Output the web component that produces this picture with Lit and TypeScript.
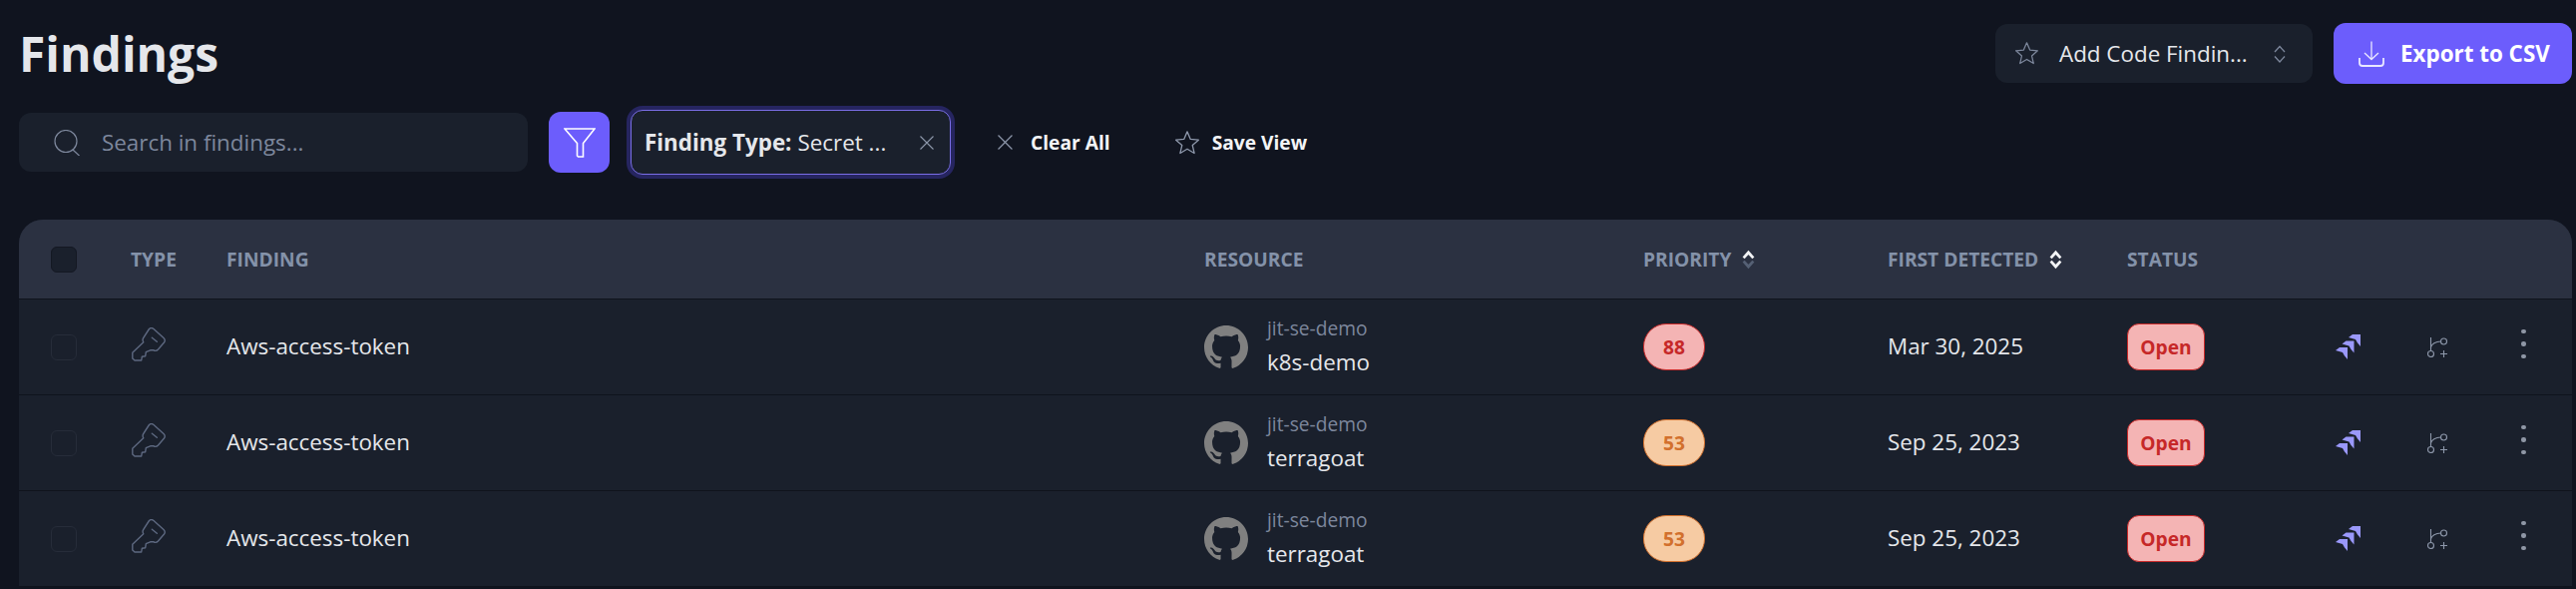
import { LitElement, html, css, svg } from "lit";
import { customElement } from "lit/decorators.js";

type Finding = { name: string; repo: string; score: number; level: "high" | "medium"; date: string };

const FINDINGS: Finding[] = [
  { name: "Aws-access-token", repo: "k8s-demo", score: 88, level: "high", date: "Mar 30, 2025" },
  { name: "Aws-access-token", repo: "terragoat", score: 53, level: "medium", date: "Sep 25, 2023" },
  { name: "Aws-access-token", repo: "terragoat", score: 53, level: "medium", date: "Sep 25, 2023" },
];

const starIcon = html`<svg class="star" viewBox="1 1 22 22" fill="none" stroke="currentColor" stroke-width="1.2" stroke-linejoin="round">
  <path d="M12 1.8l3 6.9 7.4.7-5.6 4.9 1.7 7.3-6.5-3.9-6.5 3.9 1.7-7.3-5.6-4.9 7.4-.7z" />
</svg>`;

const closeIcon = html`<svg class="close" viewBox="1 1 14 14" fill="none" stroke="currentColor" stroke-width="1.1">
  <path d="M1.5 1.5l13 13M14.500 1.500l-13 13" />
</svg>`;

const keyIcon = html`<svg class="key" viewBox="0 0 34 34" fill="none" stroke="currentColor" stroke-width="1.4" stroke-linejoin="round" stroke-linecap="round">
  <path d="M17.500 1.500Q19.700-.5 22 1.500L32 10.500Q34.200 12.700 32.500 15L26.500 22Q24.300 24.400 21.700 22.600L18.700 22.800 14.300 24.700 13.700 28.700 10.300 29.300 9.700 33H3L.8 31V25.300L11.800 14.800Q10.200 12.500 12 10z" />
  <path d="M20.300 10.300l5 4" />
</svg>`;

const githubIcon = html`<svg class="gh" viewBox="0 0 16 16" fill="#808080">
  <path d="M8 0C3.58 0 0 3.58 0 8c0 3.54 2.29 6.53 5.47 7.59.4.07.55-.17.55-.38 0-.19-.01-.82-.01-1.49-2.01.37-2.53-.49-2.69-.94-.09-.23-.48-.94-.82-1.13-.28-.15-.68-.52-.01-.53.63-.01 1.08.58 1.23.82.72 1.21 1.87.87 2.33.66.07-.52.28-.87.51-1.07-1.78-.2-3.64-.89-3.64-3.95 0-.87.31-1.59.82-2.15-.08-.2-.36-1.02.08-2.12 0 0 .67-.21 2.2.82.64-.18 1.32-.27 2-.27.68 0 1.36.09 2 .27 1.53-1.04 2.2-.82 2.2-.82.44 1.1.16 1.92.08 2.12.51.56.82 1.27.82 2.15 0 3.07-1.87 3.75-3.65 3.95.29.25.54.73.54 1.48 0 1.07-.01 1.93-.01 2.2 0 .21.15.46.55.38A8.013 8.013 0 0016 8c0-4.42-3.58-8-8-8z" />
</svg>`;

const jiraPiece = (x: number, y: number) =>
  svg`<polygon transform="translate(${x} ${y})" points="0,3 4,0 12,0 12,12 9,8.500 7,5" />`;

const jiraIcon = html`<svg class="jira" viewBox="0 0 25 25" fill="#9a98fa">
  ${jiraPiece(13, 0)} ${jiraPiece(6.500, 6.500)} ${jiraPiece(0, 13)}
</svg>`;

const branchIcon = html`<svg class="branch" viewBox="0 0 20 20" fill="none" stroke="currentColor" stroke-width="1.1">
  <circle cx="3.500" cy="16.500" r="3" />
  <circle cx="16.500" cy="4" r="3" />
  <path d="M3.500 13.500V0M3.500 10c.5-3.500 5-6 10-6M13 16.500h7M16.500 13v7" />
</svg>`;

const sortIcon = (active: boolean) => html`<svg class="sort" viewBox="0 0 12 18" fill="none" stroke-width="2.600">
  <path d="M1.500 7.500L6 2.500 10.500 7.500" stroke="#f3f4f6" />
  <path d="M1.500 10.500L6 15.500 10.500 10.500" stroke=${active ? "#f3f4f6" : "#556074"} />
</svg>`;

@customElement("app-root")
export class AppRoot extends LitElement {
  static styles = css`
    :host {
      display: block;
      width: 2582px;
      height: 590px;
      overflow: hidden;
      background: #10141f;
      color: #e5e7eb;
      font-family: "Open Sans", sans-serif;
      font-size: 22.4px;
    }

    .page {
      padding: 23px 4px 0 19px;
    }

    .top {
      display: flex;
      justify-content: space-between;
      align-items: flex-start;
      height: 61px;
    }

    h1 {
      margin: 0;
      font-size: 48px;
      line-height: 61px;
      font-weight: 700;
      color: #e5e7eb;
    }

    .top-actions {
      display: flex;
      align-items: center;
      gap: 21px;
      height: 61px;
    }

    .view-select {
      width: 318px;
      height: 59px;
      box-sizing: border-box;
      padding: 0 27px 0 20px;
      border-radius: 12px;
      background: #1a202c;
      display: flex;
      align-items: center;
      color: #e5e7eb;
    }

    .view-select .star {
      width: 23px;
      height: 23px;
      color: #7d879c;
      margin-right: 21px;
    }

    .view-select span {
      flex: 1;
      white-space: nowrap;
    }

    .updown {
      width: 12px;
      height: 18px;
    }

    .export {
      width: 239px;
      height: 61px;
      box-sizing: border-box;
      padding-left: 25px;
      border-radius: 12px;
      background: #6c5dfc;
      color: #fff;
      font-weight: 700;
      display: flex;
      align-items: center;
      gap: 16px;
    }

    .export svg {
      width: 26px;
      height: 26px;
    }

    .filters {
      display: flex;
      align-items: center;
      margin-top: 26px;
      height: 65px;
    }

    .search {
      width: 510px;
      height: 59px;
      box-sizing: border-box;
      padding-left: 35px;
      border-radius: 12px;
      background: #1a202c;
      display: flex;
      align-items: center;
      gap: 22px;
      color: #7d879c;
    }

    .search svg {
      width: 26px;
      height: 26px;
    }

    .filter-btn {
      width: 61px;
      height: 61px;
      margin-left: 21px;
      border-radius: 12px;
      background: #6c5dfc;
      display: flex;
      align-items: center;
      justify-content: center;
    }

    .filter-btn svg {
      width: 32px;
      height: 30px;
    }

    .chip {
      width: 321px;
      height: 65px;
      box-sizing: border-box;
      margin-left: 21px;
      padding: 0 16px 0 13px;
      border: 1.5px solid #7a6ee6;
      border-radius: 12px;
      box-shadow: 0 0 0 4px #262560;
      background: #1a202c;
      display: flex;
      align-items: center;
      white-space: nowrap;
    }

    .chip b {
      font-weight: 700;
      margin-right: 6px;
    }

    .chip span {
      flex: 1;
    }

    .chip .close {
      width: 14px;
      height: 14px;
      color: #8d97aa;
    }

    .link {
      display: flex;
      align-items: center;
      font-size: 19.2px;
      font-weight: 700;
      color: #f3f4f6;
      white-space: nowrap;
    }

    .link .close {
      width: 15px;
      height: 15px;
      color: #8d97aa;
      margin-right: 18px;
    }

    .link .star {
      width: 24px;
      height: 24px;
      color: #8d97aa;
      margin-right: 13px;
    }

    .clear {
      margin-left: 47px;
    }

    .save {
      margin-left: 65px;
    }

    .table {
      margin-top: 45px;
      border-radius: 24px 24px 0 0;
      overflow: hidden;
      background: #1a202c;
    }

    .row {
      display: grid;
      grid-template-columns: 80px 96px 980px 440px 245px 240px 209px 92px 94px 1fr;
      align-items: center;
      padding-left: 32px;
      height: 95px;
      border-bottom: 1px solid #0f131c;
    }

    .head {
      height: 79px;
      background: #2b3141;
      font-size: 19.2px;
      font-weight: 700;
      color: #8492a9;
    }

    .head > div {
      display: flex;
      align-items: center;
      gap: 11px;
    }

    .sort {
      width: 13px;
      height: 20px;
    }

    .check {
      width: 26px;
      height: 26px;
      box-sizing: border-box;
      border-radius: 6px;
      border: 1px solid #262c39;
    }

    .head .check {
      background: #1a202c;
      border-color: #141823;
    }

    .text {
      margin-top: -2px;
    }

    .key {
      display: block;
      width: 34px;
      height: 34px;
      color: #5d6880;
      margin: -6px 0 0 1px;
    }

    .resource {
      display: flex;
      align-items: center;
      gap: 19px;
    }

    .gh {
      width: 44px;
      height: 44px;
      display: block;
    }

    .org {
      font-size: 19.2px;
      line-height: 26px;
      color: #7d879c;
    }

    .repo {
      margin: 5px 0 2px;
      line-height: 31px;
    }

    .badge {
      height: 47px;
      box-sizing: border-box;
      display: inline-flex;
      align-items: center;
      justify-content: center;
      border: 1.5px solid;
      font-size: 19.2px;
      font-weight: 700;
    }

    .score {
      width: 62px;
      border-radius: 23px;
    }

    .high {
      background: #f4b4b4;
      border-color: #c62828;
      color: #c62828;
    }

    .medium {
      background: #f6cba3;
      border-color: #d2702d;
      color: #d2702d;
    }

    .status {
      width: 78px;
      border-radius: 12px;
    }

    .jira {
      display: block;
      width: 25px;
      height: 25px;
    }

    .branch {
      display: block;
      width: 20px;
      height: 20px;
      color: #8d97aa;
    }

    .dots {
      display: flex;
      flex-direction: column;
      gap: 8px;
      margin-top: -6px;
    }

    .dots i {
      display: block;
      width: 4.500px;
      height: 4.500px;
      border-radius: 50%;
      background: #8f97a6;
    }
  `;

  private renderRow(f: Finding) {
    return html`
      <div class="row">
        <div class="check"></div>
        <div>${keyIcon}</div>
        <div class="text">${f.name}</div>
        <div class="resource">
          ${githubIcon}
          <div>
            <div class="org">jit-se-demo</div>
            <div class="repo">${f.repo}</div>
          </div>
        </div>
        <div><span class="badge score ${f.level}">${f.score}</span></div>
        <div class="text">${f.date}</div>
        <div><span class="badge status high">Open</span></div>
        <div>${jiraIcon}</div>
        <div>${branchIcon}</div>
        <div class="dots"><i></i><i></i><i></i></div>
      </div>
    `;
  }

  render() {
    return html`
      <div class="page">
        <div class="top">
          <h1>Findings</h1>
          <div class="top-actions">
            <div class="view-select">
              ${starIcon}
              <span>Add Code Findin...</span>
              <svg class="updown" viewBox="0 0 12 18" fill="none" stroke="#7d879c" stroke-width="1.300">
                <path d="M1 7L6 1.500 11 7M1 11.500L6 17 11 11.500" />
              </svg>
            </div>
            <div class="export">
              <svg viewBox="0 0 26 26" fill="none" stroke="#e9e7ff" stroke-width="1.300">
                <path d="M13 .5v18M6 12l7 6.500L20 12" />
                <path d="M1 17v5a3 3 0 0 0 3 3h18a3 3 0 0 0 3-3v-5" stroke-width="1.800" />
              </svg>
              Export to CSV
            </div>
          </div>
        </div>

        <div class="filters">
          <div class="search">
            <svg viewBox="0 0 26 26" fill="none" stroke="currentColor" stroke-width="1.200">
              <circle cx="12" cy="11.500" r="11" />
              <path d="M19 20l6.500 6" />
            </svg>
            Search in findings...
          </div>
          <div class="filter-btn">
            <svg viewBox="0 0 32 30" fill="none" stroke="#fff" stroke-width="1.600">
              <path d="M1 1h30L19.500 15.500V29h-5l-1-1V15.500z" />
            </svg>
          </div>
          <div class="chip">
            <b>Finding Type:</b>
            <span>Secret ...</span>
            ${closeIcon}
          </div>
          <div class="link clear">${closeIcon}Clear All</div>
          <div class="link save">${starIcon}Save View</div>
        </div>

        <div class="table">
          <div class="row head">
            <div class="check"></div>
            <div>TYPE</div>
            <div>FINDING</div>
            <div>RESOURCE</div>
            <div>PRIORITY ${sortIcon(false)}</div>
            <div>FIRST DETECTED ${sortIcon(true)}</div>
            <div>STATUS</div>
          </div>
          ${FINDINGS.map((f) => this.renderRow(f))}
        </div>
      </div>
    `;
  }
}
